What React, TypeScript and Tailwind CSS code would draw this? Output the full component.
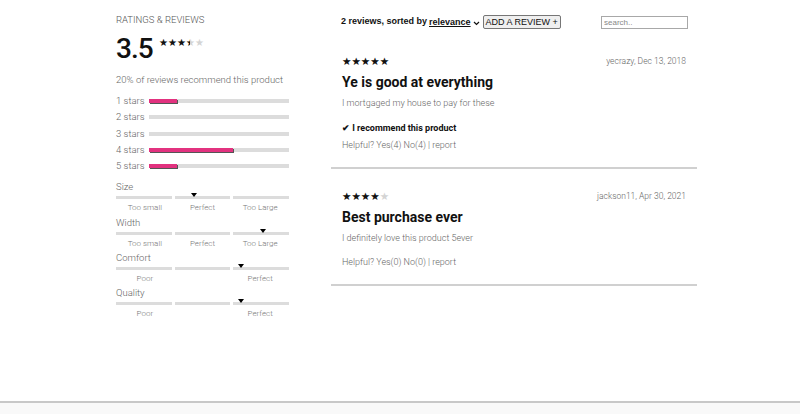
import React from "react";

const breakdown = [
  { stars: 1, pct: 20 },
  { stars: 2, pct: 0 },
  { stars: 3, pct: 0 },
  { stars: 4, pct: 60 },
  { stars: 5, pct: 20 },
];

const characteristics = [
  { name: "Size", pos: 45, labels: ["Too small", "Perfect", "Too Large"] },
  { name: "Width", pos: 85, labels: ["Too small", "Perfect", "Too Large"] },
  { name: "Comfort", pos: 72, labels: ["Poor", "", "Perfect"] },
  { name: "Quality", pos: 72, labels: ["Poor", "", "Perfect"] },
];

const reviews = [
  {
    rating: 5,
    user: "yecrazy, Dec 13, 2018",
    title: "Ye is good at everything",
    body: "I mortgaged my house to pay for these",
    recommend: true,
    yes: 4,
    no: 4,
  },
  {
    rating: 4,
    user: "jackson11, Apr 30, 2021",
    title: "Best purchase ever",
    body: "I definitely love this product 5ever",
    recommend: false,
    yes: 0,
    no: 0,
  },
];

function Stars({ rating, className }: { rating: number; className: string }) {
  return (
    <span className={"inline-flex leading-none font-['DejaVu_Sans',sans-serif] " + className}>
      {[0, 1, 2, 3, 4].map((i) => {
        const fill = Math.max(0, Math.min(1, rating - i));
        return (
          <span key={i} className="relative inline-block text-[#d4d4d4]">
            ★
            {fill > 0 && (
              <span className="absolute left-0 top-0 overflow-hidden text-[#111]" style={{ width: `${fill * 100}%` }}>
                ★
              </span>
            )}
          </span>
        );
      })}
    </span>
  );
}

function RatingsPanel() {
  return (
    <div className="w-[173px] shrink-0 text-[#555] font-[Roboto,sans-serif] font-light">
      <div className="mt-[14px] text-[9.5px] leading-[12px] uppercase">Ratings &amp; Reviews</div>

      <div className="mt-[7px] flex items-start">
        <span className="text-[28px] leading-[32px] font-medium tracking-[-1px] text-[#111]">3.5</span>
        <Stars rating={3.5} className="ml-[6px] mt-[5px] text-[10px]" />
      </div>

      <div className="mt-[9px] whitespace-nowrap text-[9.5px] leading-[12px] text-[#666]">
        20% of reviews recommend this product
      </div>

      <div className="mt-[7px] flex flex-col">
        {breakdown.map((b) => (
          <div key={b.stars} className="flex items-center h-[16.3px]">
            <span className="w-[33px] text-[9.5px] text-[#666]">{b.stars} stars</span>
            <div className="flex-1 h-[4px] bg-[#dcdcdc]">
              <div className="h-full bg-[#e2327f] shadow-[1px_1px_0_#555]" style={{ width: `${b.pct}%` }} />
            </div>
          </div>
        ))}
      </div>

      <div className="mt-[7px] flex flex-col">
        {characteristics.map((c) => (
          <div key={c.name} className="h-[35.3px]">
            <div className="text-[9.5px] leading-[12px] text-[#666]">{c.name}</div>
            <div className="relative mt-[3px] grid grid-cols-3 gap-[3px]">
              <div className="h-[3px] bg-[#dcdcdc]" />
              <div className="h-[3px] bg-[#dcdcdc]" />
              <div className="h-[3px] bg-[#dcdcdc]" />
              <div
                className="absolute top-[-3px] -translate-x-1/2 w-0 h-0 border-l-[3px] border-r-[3px] border-t-[4px] border-l-transparent border-r-transparent border-t-black"
                style={{ left: `${c.pos}%` }}
              />
            </div>
            <div className="mt-[4px] grid grid-cols-3 text-center text-[8px] leading-[10px] text-[#777]">
              {c.labels.map((l, i) => (
                <span key={i}>{l}</span>
              ))}
            </div>
          </div>
        ))}
      </div>
    </div>
  );
}

function ReviewCard({ r }: { r: (typeof reviews)[number] }) {
  return (
    <div className="px-[11px] pt-[21px] pb-[16px] border-b-2 border-[#d0d0d0] font-[Roboto,sans-serif]">
      <div className="flex items-center justify-between h-[12px]">
        <Stars rating={r.rating} className="text-[10.5px]" />
        <span className="text-[8.5px] font-light text-[#666]">{r.user}</span>
      </div>
      <div className="mt-[5px] text-[14px] leading-[20px] font-bold text-[#111]">{r.title}</div>
      <div className="mt-[5px] text-[9px] leading-[12px] font-light text-[#666]">{r.body}</div>
      {r.recommend && (
        <div className="mt-[13px] text-[9px] leading-[12px] font-bold text-[#111]">✔ I recommend this product</div>
      )}
      <div className={(r.recommend ? "mt-[5px]" : "mt-[12px]") + " text-[9px] leading-[12px] font-light text-[#666]"}>
        Helpful? Yes({r.yes}) No({r.no}) | report
      </div>
    </div>
  );
}

function ReviewList() {
  return (
    <div className="w-[366px] shrink-0 ml-[42px]">
      <div className="mt-[15px] h-[14px] flex items-center pl-[10px] pr-[9px] font-['Liberation_Sans',Arial,sans-serif] text-[9px] text-[#111]">
        <span className="font-bold">2 reviews, sorted by</span>
        <span className="ml-[2px] font-bold underline mt-[2px]">relevance</span>
        <svg width="7" height="5" viewBox="0 0 7 5" className="ml-[2px] mt-[2px]">
          <path d="M1 1l2.5 2.5L6 1" stroke="#111" strokeWidth="1.2" fill="none" />
        </svg>
        <button className="ml-[3px] h-[14px] px-[2px] border border-[#767676] rounded-[2px] bg-[#efefef] text-[9px] leading-[12px] text-[#111]">
          ADD A REVIEW +
        </button>
        <input
          placeholder="search.."
          className="ml-auto w-[87px] h-[13px] border border-[#a8a8a8] px-[2px] text-[8px] placeholder:text-[#888] outline-none"
        />
      </div>
      <div className="mt-[5px]">
        {reviews.map((r, i) => (
          <ReviewCard key={i} r={r} />
        ))}
      </div>
    </div>
  );
}

export default function App() {
  return (
    <div className="w-[800px] h-[414px] bg-white overflow-hidden">
      <div className="h-[401px] flex pl-[116px]">
        <RatingsPanel />
        <ReviewList />
      </div>
      <div className="h-[13px] border-t-2 border-[#c8c8c8] bg-[#f9f9f9]" />
    </div>
  );
}
